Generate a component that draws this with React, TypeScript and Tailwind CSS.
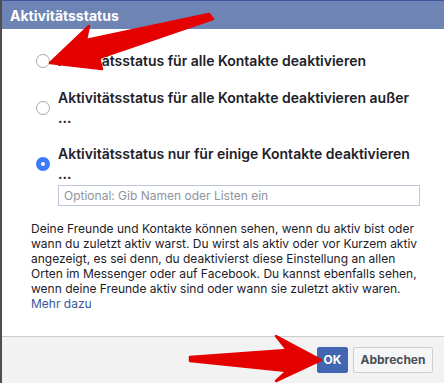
import React from "react";

function Radio({ checked }: { checked?: boolean }) {
  if (checked) {
    return (
      <span className="flex h-[14px] w-[14px] shrink-0 items-center justify-center rounded-full bg-[#3b7cf4]">
        <span className="h-[4px] w-[4px] rounded-full bg-white" />
      </span>
    );
  }
  return <span className="h-[14px] w-[14px] shrink-0 rounded-full border border-[#a8a8a8] bg-white" />;
}

function Option({ checked, children }: { checked?: boolean; children: React.ReactNode }) {
  return (
    <div className="flex items-center gap-[8px]">
      <Radio checked={checked} />
      <div className="whitespace-nowrap text-[14px] font-semibold leading-[20px] text-[#1d2129]">
        {children}
      </div>
    </div>
  );
}

function Arrows() {
  return (
    <svg
      className="pointer-events-none absolute inset-0"
      width="444"
      height="386"
      viewBox="0 0 444 386"
    >
      <g fill="#e50000" stroke="#e50000" strokeWidth="2.5" strokeLinejoin="round">
        <polygon points="50,63 89,26 86,40 209,14 213,19 99,58 102,69" />
        <polygon points="321,360 276,336 287,350 190,357 190,361 287,371 276,381" />
      </g>
    </svg>
  );
}

export default function App() {
  return (
    <div className="relative h-[386px] w-[444px] overflow-hidden bg-white font-['Inter',sans-serif]">
      <div className="flex h-[383px] flex-col border-l-2 border-[#4f4f4f]">
        <div className="flex h-[29px] shrink-0 items-center border-t border-[#3b5998] bg-[#6d84b4] pl-[8px]">
          <span className="text-[14px] font-bold text-white">Aktivitätsstatus</span>
        </div>

        <div className="flex flex-1 flex-col pl-[29px] pt-[22px]">
          <div className="pl-[5px]">
            <Option>Aktivitätsstatus für alle Kontakte deaktivieren</Option>
            <div className="mt-[17px]">
              <Option>
                Aktivitätsstatus für alle Kontakte deaktivieren außer
                <br />
                ...
              </Option>
            </div>
            <div className="mt-[16px]">
              <Option checked>
                Aktivitätsstatus nur für einige Kontakte deaktivieren
                <br />
                ...
              </Option>
            </div>
            <div className="ml-[22px] mt-[1px] flex h-[21px] w-[362px] items-center border border-[#bdc7d8] px-[5px] text-[12px] text-[#8d949e]">
              Optional: Gib Namen oder Listen ein
            </div>
          </div>

          <p className="mt-[15px] whitespace-nowrap text-[12px] leading-[15px] text-[#1d2129]">
            Deine Freunde und Kontakte können sehen, wenn du aktiv bist oder
            <br />
            wann du zuletzt aktiv warst. Du wirst als aktiv oder vor Kurzem aktiv
            <br />
            angezeigt, es sei denn, du deaktivierst diese Einstellung an allen
            <br />
            Orten im Messenger oder auf Facebook. Du kannst ebenfalls sehen,
            <br />
            wenn deine Freunde aktiv sind oder wann sie zuletzt aktiv waren.
            <br />
            <span className="text-[#385898]">Mehr dazu</span>
          </p>
        </div>

        <div className="flex h-[47px] shrink-0 items-center justify-end gap-[5px] border-t border-[#cccccc] bg-[#f2f2f2] pr-[11px]">
          <button className="h-[26px] w-[31px] rounded-[2px] border border-[#4267b2] bg-[#4267b2] text-[12px] font-bold text-white">
            OK
          </button>
          <button className="h-[26px] w-[80px] rounded-[2px] border border-[#ccd0d5] bg-[#f5f6f7] text-[12px] font-bold text-[#4b4f56]">
            Abbrechen
          </button>
        </div>
      </div>
      <Arrows />
    </div>
  );
}
